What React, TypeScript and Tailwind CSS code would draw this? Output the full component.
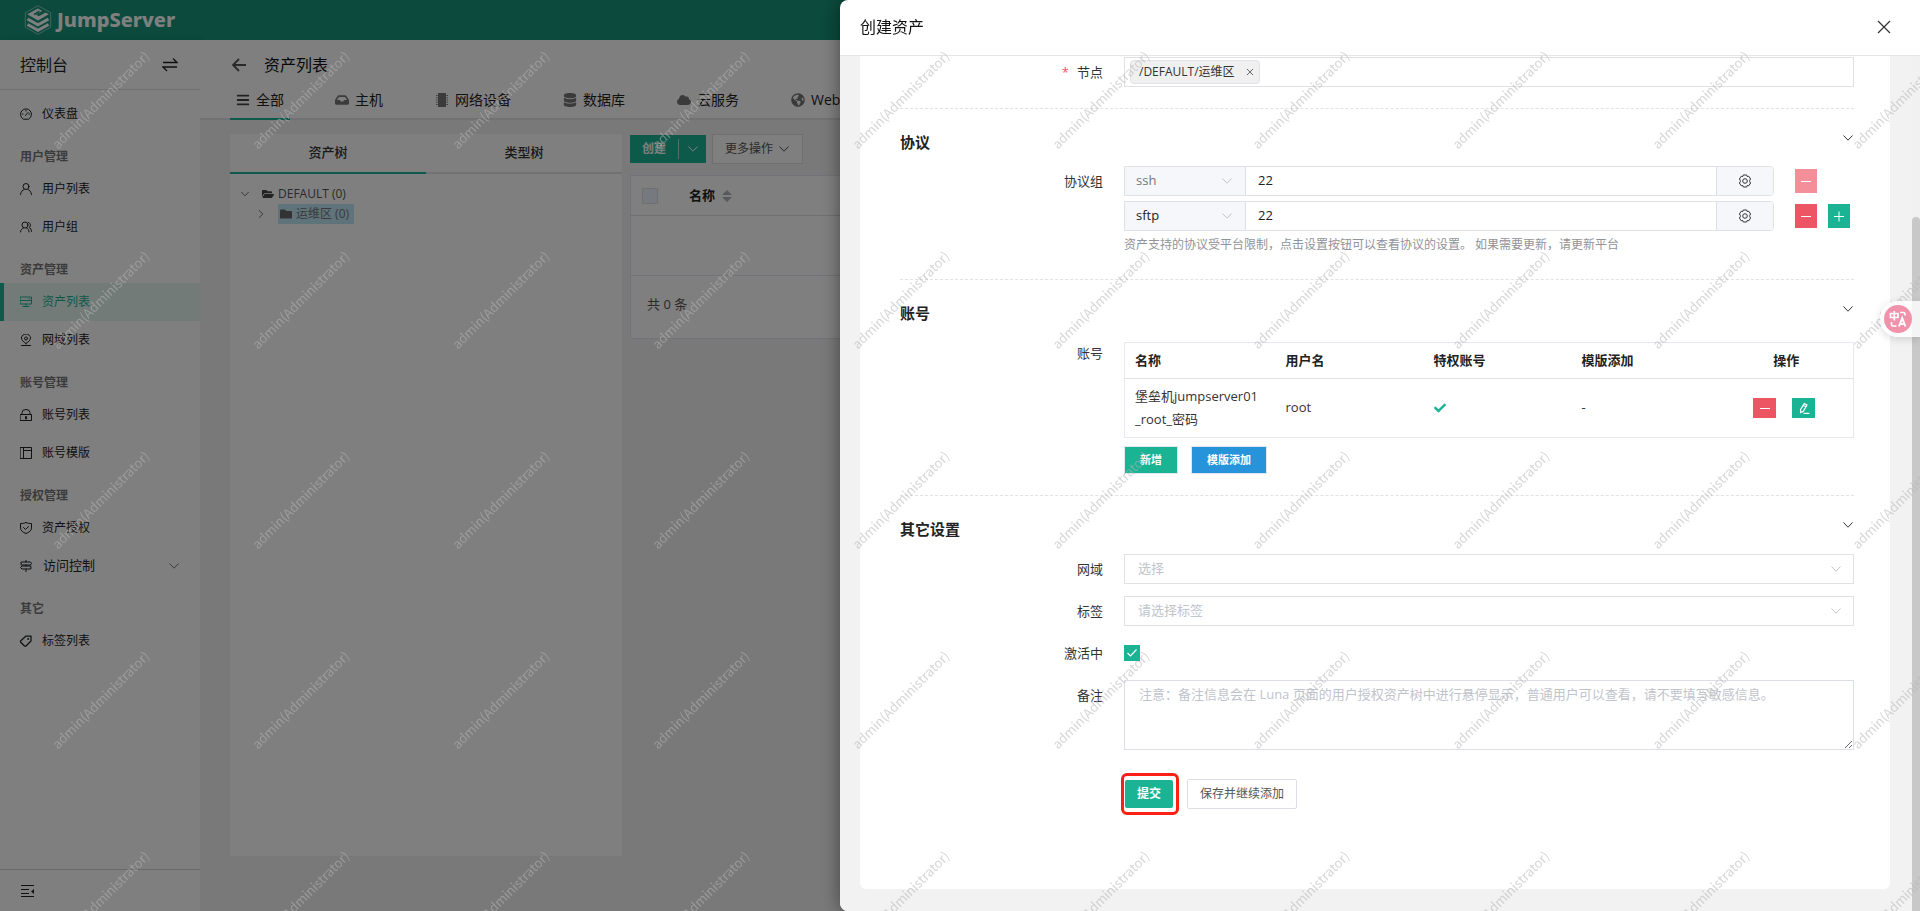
import React, { useState } from 'react';
import { FaBars, FaCheck, FaCloud, FaDatabase, FaFolder, FaFolderOpen, FaGlobeAmericas, FaInbox } from 'react-icons/fa';

type IconProps = { className?: string };

const Stroke: React.FC<{ children: React.ReactNode; className?: string }> = ({ children, className = 'size-3' }) => (
  <svg
    viewBox="0 0 24 24"
    className={className}
    fill="none"
    stroke="currentColor"
    strokeWidth="2"
    strokeLinecap="round"
    strokeLinejoin="round"
    aria-hidden="true"
  >
    {children}
  </svg>
);

const Chevron: React.FC<IconProps> = ({ className = 'size-3' }) => (
  <svg viewBox="0 0 12 12" className={className} fill="none" stroke="currentColor" strokeWidth="1" aria-hidden="true">
    <path d="M1.500 3.500 6 8.200l4.500-4.700" />
  </svg>
);

const Minus: React.FC = () => (
  <svg viewBox="0 0 12 12" className="size-3" stroke="currentColor" strokeWidth="1" aria-hidden="true">
    <path d="M1 6.500h10" />
  </svg>
);

const Plus: React.FC = () => (
  <svg viewBox="0 0 12 12" className="size-3" stroke="currentColor" strokeWidth="1" aria-hidden="true">
    <path d="M1 6.500h10M6 1.500v10" />
  </svg>
);

const Gear: React.FC = () => (
  <svg viewBox="0 0 14 14" className="size-[14px]" fill="none" stroke="currentColor" aria-hidden="true">
    <path d="M5.300 1h3.400l.5 1.500 1.600-.2L12.600 5l-.9 1.300v1.400l.9 1.300-1.800 2.700-1.600-.2-.5 1.500H5.300l-.5-1.500-1.600.2L1.400 9l.9-1.300V6.300L1.400 5l1.800-2.700 1.600.2z" />
    <circle cx="7" cy="7" r="2.300" />
  </svg>
);

const Pencil: React.FC = () => (
  <svg viewBox="0 0 12 12" className="size-3" fill="none" stroke="currentColor" strokeWidth="1.200" aria-hidden="true">
    <path d="M6.300 1.600 9 3 5.300 9.300l-2.700 1.200-.1-2.800zM5.300 3.300l2.700 1.500M5.500 11.300h6" />
  </svg>
);

const Microchip: React.FC<IconProps> = ({ className }) => (
  <svg viewBox="0 0 14 14" className={className} fill="currentColor" aria-hidden="true">
    <path d="M3 0h8v14H3z" />
    <path d="M1 2h1.500v1H1zM1 4.250h1.500v1H1zM1 6.500h1.500v1H1zM1 8.750h1.500v1H1zM1 11h1.500v1H1zM11.500 2H13v1h-1.500zM11.500 4.250H13v1h-1.500zM11.500 6.500H13v1h-1.500zM11.500 8.750H13v1h-1.500zM11.500 11H13v1h-1.500z" />
  </svg>
);

const menu = [
  {
    title: '',
    items: [
      { label: '仪表盘', icon: <><path d="M6 22a11 11 0 1 1 12 0z" /><path d="m11 15 5-6M5 12h1M12 5v1M18 12h1" /></> },
    ],
  },
  {
    title: '用户管理',
    items: [
      { label: '用户列表', icon: <><circle cx="12" cy="7" r="6" /><path d="M1 23c1-6 4-9 7-10M23 23c-1-6-4-9-7-10" /></> },
      { label: '用户组', icon: <><circle cx="10" cy="8" r="6" /><path d="M1 22c0-4 3-7 6-8M18 22c0-4-2-7-5-8M17 3c5 1 5 8 1 10 3 1 5 4 5 8" /></> },
    ],
  },
  {
    title: '资产管理',
    items: [
      { label: '资产列表', active: true, icon: <><path d="M1 2h22v14H1zM1 9h22M12 16v5M6 21h12M18 5.500h1" /></> },
      { label: '网域列表', icon: <><path d="M12 19C6 15 3 12 3 8a9 8 0 0 1 18 0c0 4-3 7-9 11zM3 23h18" /><circle cx="12" cy="9" r="3" /></> },
    ],
  },
  {
    title: '账号管理',
    items: [
      { label: '账号列表', icon: <><path d="M1 11h22v12H1zM4 11V7a8 6 0 0 1 16 0v4" /><path d="M12 16v3" strokeWidth="4" /></> },
      { label: '账号模版', icon: <path d="M1 1h22v22H1zM7 1v22M7 7h16" /> },
    ],
  },
  {
    title: '授权管理',
    items: [
      { label: '资产授权', icon: <><path d="M12 1c4 2 7 2 11 2v9c0 5-5 9-11 11C6 21 1 17 1 12V3c4 0 7 0 11-2z" /><path d="m7 11 4 4 6-6" /></> },
      { label: '访问控制', expandable: true, icon: <path d="M12 0v4M3 4h18l2 3-2 3H3zM12 10v2M21 12H4l-3 3 3 3h17zM12 18v6" /> },
    ],
  },
  {
    title: '其它',
    items: [
      { label: '标签列表', icon: <><path d="M12 2h10v10L12 22l-3 0-8-8 0-2z" strokeWidth="2.500" /><circle cx="16" cy="8" r="1" /></> },
    ],
  },
];

const tabs = [
  { label: '全部', Icon: FaBars },
  { label: '主机', Icon: FaInbox },
  { label: '网络设备', Icon: Microchip },
  { label: '数据库', Icon: FaDatabase },
  { label: '云服务', Icon: FaCloud },
  { label: 'Web', Icon: FaGlobeAmericas },
];

const Logo: React.FC = () => (
  <div className="flex items-center gap-[5px] text-white">
    <svg viewBox="0 0 28 30" className="h-[30px] w-7" fill="none" stroke="currentColor" aria-hidden="true">
      <path d="M14 .7 26.700 7.800v14.400L14 29.300 1.300 22.200V7.800z" strokeWidth=".7" opacity=".7" />
      <path d="M14 3.500 3.200 9.300 14 15.500l10.800-6.200-3.200-1.700-6.800 3.700-3-1.700 6.400-3.700z" fill="currentColor" stroke="none" />
      <path d="m10 9.500 5.500-3.300" strokeWidth="1.600" stroke="#169478" />
      <path d="m3.500 14 10.500 5.800L24.500 14M3.500 19.500 14 25.300l10.500-5.800" strokeWidth="3" />
    </svg>
    <span className="font-['Noto_Sans',sans-serif] text-xl leading-8 font-extrabold">JumpServer</span>
  </div>
);

const Sidebar: React.FC = () => (
  <aside className="flex w-[200px] shrink-0 flex-col bg-white text-[#1f2225] shadow-[1px_0_6px_rgba(0,0,0,0.12)]">
    <div className="flex h-[50px] items-center justify-between border-b border-[#e0e0e0] px-5">
      <span className="text-base">控制台</span>
      <button type="button" aria-label="切换视图" className="mr-[2px]">
        <svg viewBox="0 0 16 16" className="size-4" fill="none" stroke="currentColor" strokeWidth="1.300" aria-hidden="true">
          <path d="M1 5.500h14L11 1.500M15 10H1l4 4" />
        </svg>
      </button>
    </div>
    <nav className="flex-1 pt-[5px]">
      {menu.map((group, i) => (
        <div key={i}>
          {group.title && <h3 className="h-[37px] px-5 pt-[14px] text-xs leading-5 font-semibold text-[#777]">{group.title}</h3>}
          {group.items.map((item: any) => (
            <a
              key={item.label}
              href="#"
              className={
                item.active
                  ? 'flex h-[38px] items-center border-l-4 border-[#1ab394] bg-[#e6f7f3] pr-5 pl-4 text-xs text-[#1ab394]'
                  : 'flex h-[38px] items-center pr-5 pl-5 text-xs'
              }
            >
              <Stroke>{item.icon}</Stroke>
              <span className={item.expandable ? 'ml-[11px] flex-1 text-[13px]' : 'ml-[10px] flex-1'}>{item.label}</span>
              {item.expandable && <Chevron className="size-3 text-[#777]" />}
            </a>
          ))}
        </div>
      ))}
    </nav>
    <div className="flex h-[42px] items-center border-t border-[#d5d5d5] px-5">
      <button type="button" aria-label="收起菜单">
        <svg viewBox="0 0 14 14" className="size-[14px]" stroke="currentColor" aria-hidden="true">
          <path d="M1 1.500h13M1 12.500h13M1 5.500h8M1 9.500h8" />
          <path d="M11 7.500 14 5v5z" fill="currentColor" stroke="none" />
        </svg>
      </button>
    </div>
  </aside>
);

const AssetPage: React.FC = () => (
  <main className="flex min-w-0 flex-1 flex-col overflow-hidden bg-[#f2f2f2]">
    <div className="h-20 border-b-2 border-[#e2e4e8] bg-white px-[30px]">
      <div className="flex h-[50px] items-center gap-[18px]">
        <button type="button" aria-label="返回">
          <svg viewBox="0 0 16 16" className="size-4" fill="none" stroke="#555" strokeWidth="1.800" aria-hidden="true">
            <path d="M16 8H3M9 2 3 8l6 6" />
          </svg>
        </button>
        <h1 className="text-base text-[#111]">资产列表</h1>
      </div>
      <div className="flex h-[30px] gap-10 text-sm text-[#222]">
        {tabs.map(({ label, Icon }, i) => (
          <button
            key={label}
            type="button"
            className={
              i === 0
                ? 'flex h-[30px] shrink-0 items-center gap-[6px] border-b-2 border-[#1ab394] px-[6px] pb-2'
                : 'flex h-[30px] shrink-0 items-center gap-[6px] border-b-2 border-transparent pr-[7px] pb-2 pl-[5px]'
            }
          >
            <Icon className={i === 0 ? 'size-[14px] text-[#444]' : 'size-[14px] text-[#777]'} />
            {label}
          </button>
        ))}
      </div>
    </div>

    <div className="flex min-h-0 flex-1 gap-2 pt-[14px] pl-[30px]">
      <section className="mb-[55px] w-[392px] shrink-0 bg-white">
        <div className="grid grid-cols-2 text-[13px] font-medium text-[#333]">
          <button type="button" className="h-10 border-b-2 border-[#1ab394]">资产树</button>
          <button type="button" className="h-10 border-b-2 border-[#e2e4e8]">类型树</button>
        </div>
        <ul className="pt-[10px] pl-[10px] text-xs text-[#555]">
          <li className="flex h-5 items-center">
            <Chevron className="size-[10px]" />
            <FaFolderOpen className="ml-3 size-3 text-[#444]" />
            <span className="ml-1">DEFAULT (0)</span>
          </li>
          <li className="flex h-5 items-center pl-4">
            <Chevron className="size-[10px] -rotate-90" />
            <span className="ml-3 flex h-5 items-center gap-1 bg-[#bee6f5] px-[2px] pr-[5px] text-[#777]">
              <FaFolder className="size-3 text-[#666]" />
              运维区 (0)
            </span>
          </li>
        </ul>
      </section>

      <section className="min-w-0 flex-1">
        <div className="flex gap-[6px] text-xs">
          <div className="mt-px flex h-7 items-center bg-[#1ab394] text-white">
            <button type="button" className="h-full px-3 font-semibold">创建</button>
            <button type="button" aria-label="更多创建方式" className="flex h-5 w-7 items-center justify-center border-l border-white/60">
              <Chevron />
            </button>
          </div>
          <button type="button" className="flex h-[30px] items-center gap-[5px] border border-[#dcdfe6] bg-white px-3 text-[#555]">
            更多操作
            <Chevron />
          </button>
        </div>
        <div className="mt-[11px] h-[164px] border border-[#e4e7f0] bg-white">
          <div className="flex h-10 items-center border-b border-[#dcdfe6] pl-[11px]">
            <input type="checkbox" aria-label="全选" className="size-4 appearance-none border border-[#dcdfe6] bg-[#edf2fc]" />
            <span className="ml-[31px] text-[13px] font-semibold text-[#222]">名称</span>
            <svg viewBox="0 0 10 12" className="ml-[7px] h-3 w-[10px]" fill="#b0b3ba" aria-hidden="true">
              <path d="M5 0 10 5H0zM0 7h10l-5 5z" />
            </svg>
          </div>
          <div className="h-[60px] border-b border-[#e4e7f0]" />
          <p className="pt-[18px] pl-4 text-[13px] leading-5 text-[#555]">共 0 条</p>
        </div>
      </section>
    </div>
  </main>
);

const Section: React.FC<{ title: string; children: React.ReactNode }> = ({ title, children }) => (
  <section className="border-t border-dashed border-[#e2e2e2] pt-[21px]">
    <div className="flex h-6 items-center justify-between">
      <h3 className="text-[15px] leading-6 font-semibold text-[#222]">{title}</h3>
      <button type="button" aria-label={`收起${title}`} className="mb-2">
        <Chevron />
      </button>
    </div>
    {children}
  </section>
);

const Row: React.FC<{ label: string; htmlFor?: string; required?: boolean; children: React.ReactNode }> = ({
  label,
  htmlFor,
  required,
  children,
}) => (
  <div className="flex">
    <label htmlFor={htmlFor} className="w-[203px] shrink-0 text-right text-[13px] leading-[30px]">
      {required && <span className="mr-2 text-[#ed5565]">*</span>}
      {label}
    </label>
    <div className="ml-[21px] min-w-0 flex-1">{children}</div>
  </div>
);

const PickBox: React.FC<{ id: string; placeholder: string }> = ({ id, placeholder }) => (
  <div className="flex h-[30px] items-center border border-[#dfe1e5] pr-[11px] text-[#c0c4cc]">
    <select id={id} defaultValue="" className="h-full flex-1 appearance-none bg-transparent px-[13px] text-[13px] outline-none">
      <option value="">{placeholder}</option>
    </select>
    <Chevron className="pointer-events-none size-3" />
  </div>
);

const ProtocolRow: React.FC<{ name: string; port: string; locked?: boolean; onPort: (v: string) => void }> = ({
  name,
  port,
  locked,
  onPort,
}) => (
  <div className="flex items-center">
    <div className="flex h-[30px] flex-1 overflow-hidden rounded-r-sm border border-[#dfe1e5]">
      <div className="flex w-[121px] items-center border-r border-[#dcdfe6] bg-[#f5f7fa] pr-3 text-[#c0c4cc]">
        <select
          aria-label="协议"
          disabled={locked}
          defaultValue={name}
          className="h-full flex-1 appearance-none bg-transparent px-[11px] text-[13px] text-[#222] outline-none disabled:text-[#777] disabled:opacity-100"
        >
          <option>{name}</option>
        </select>
        <Chevron />
      </div>
      <input
        aria-label={`${name} 端口`}
        value={port}
        onChange={(e) => onPort(e.target.value)}
        className="min-w-0 flex-1 px-3 text-[13px] text-[#222] outline-none"
      />
      <button type="button" aria-label={`${name} 设置`} className="flex w-[57px] items-center justify-center border-l border-[#dcdfe6] bg-[#f5f7fa]">
        <Gear />
      </button>
    </div>
    <div className="flex w-20 gap-[11px] pl-[21px]">
      <button
        type="button"
        aria-label={`删除 ${name}`}
        disabled={locked}
        className="flex h-6 w-[22px] items-center justify-center bg-[#ed5565] text-white disabled:bg-[#f48e98]"
      >
        <Minus />
      </button>
      {!locked && (
        <button type="button" aria-label="添加协议" className="flex h-6 w-[22px] items-center justify-center bg-[#1ab394] text-white">
          <Plus />
        </button>
      )}
    </div>
  </div>
);

const CreateDrawer: React.FC = () => {
  const [ports, setPorts] = useState({ ssh: '22', sftp: '22' });
  const [active, setActive] = useState(true);
  const [comment, setComment] = useState('');

  return (
    <div
      role="dialog"
      aria-label="创建资产"
      className="fixed inset-y-0 right-0 flex w-[56.25%] flex-col overflow-hidden rounded-l-lg bg-white text-[#333] shadow-[0_0_18px_rgba(0,0,0,0.45)]"
    >
      <header className="flex h-14 shrink-0 items-center justify-between border-b border-[#e6e6e8] px-5 pb-px">
        <h2 className="text-base text-[#111]">创建资产</h2>
        <button type="button" aria-label="关闭" className="mr-[9px]">
          <svg viewBox="0 0 14 14" className="size-[14px]" stroke="#333" strokeWidth="1.200" aria-hidden="true">
            <path d="m1 1 12 12M13 1 1 13" />
          </svg>
        </button>
      </header>

      <div className="flex min-h-0 flex-1 bg-[#f2f2f2]">
        <form className="mb-[22px] ml-5 flex-1 rounded-b-md bg-white pr-9 pl-10" onSubmit={(e) => e.preventDefault()}>
          <div className="pt-px pb-[21px]">
            <Row label="节点" required>
              <div className="flex h-[30px] items-center border border-[#dfe1e5] px-[5px]">
                <span className="flex h-6 items-center gap-2 rounded-sm border border-[#e0e2e6] bg-[#f0f0f1] pr-[2px] pl-2 text-xs text-[#333]">
                  /DEFAULT/运维区
                  <button type="button" aria-label="移除节点" className="p-[3px]">
                    <svg viewBox="0 0 8 8" className="size-2" stroke="#666" aria-hidden="true">
                      <path d="m1 1 6 6M7 1 1 7" />
                    </svg>
                  </button>
                </span>
              </div>
            </Row>
          </div>

          <Section title="协议">
            <div className="pt-3 pb-[24px]">
              <Row label="协议组">
                <div className="flex flex-col gap-[5px]">
                  <ProtocolRow name="ssh" port={ports.ssh} locked onPort={(v) => setPorts({ ...ports, ssh: v })} />
                  <ProtocolRow name="sftp" port={ports.sftp} onPort={(v) => setPorts({ ...ports, sftp: v })} />
                </div>
                <p className="pt-1 text-xs leading-5 text-[#909399]">
                  资产支持的协议受平台限制，点击设置按钮可以查看协议的设置。 如果需要更新，请更新平台
                </p>
              </Row>
            </div>
          </Section>

          <Section title="账号">
            <div className="pt-[13px] pb-[21px]">
              <Row label="账号">
                <table className="mt-1 w-full table-fixed border border-[#e6e8f2] text-left text-[13px]">
                  <thead>
                    <tr className="h-9 border-b border-[#dfe1e5] text-[#222]">
                      <th className="w-[151px] px-[10px] font-semibold">名称</th>
                      <th className="w-[148px] px-[10px] font-semibold">用户名</th>
                      <th className="w-[148px] px-[10px] font-semibold">特权账号</th>
                      <th className="w-[148px] px-[10px] font-semibold">模版添加</th>
                      <th className="px-[10px] text-center font-semibold">操作</th>
                    </tr>
                  </thead>
                  <tbody>
                    <tr className="h-[59px]">
                      <td className="px-[10px] leading-[23px] break-words">堡垒机jumpserver01 _root_密码</td>
                      <td className="px-[10px]">root</td>
                      <td className="px-[10px]">
                        <FaCheck className="size-3 text-[#1ab394]" />
                      </td>
                      <td className="px-[10px]">-</td>
                      <td className="pr-[14px] pl-[10px]">
                        <div className="flex justify-center gap-4">
                          <button type="button" aria-label="删除账号" className="flex h-5 w-[23px] items-center justify-center bg-[#ed5565] text-white">
                            <Minus />
                          </button>
                          <button type="button" aria-label="编辑账号" className="flex h-5 w-[23px] items-center justify-center bg-[#1ab394] text-white">
                            <Pencil />
                          </button>
                        </div>
                      </td>
                    </tr>
                  </tbody>
                </table>
                <div className="flex gap-[13px] pt-2 text-[11px] font-semibold text-white">
                  <button type="button" className="h-7 border border-[#e4e5ee] bg-[#1ab394] bg-clip-padding px-[15px]">新增</button>
                  <button type="button" className="h-7 border border-[#e4e5ee] bg-[#2693da] bg-clip-padding px-[15px]">模版添加</button>
                </div>
              </Row>
            </div>
          </Section>

          <Section title="其它设置">
            <div className="flex flex-col gap-3 pt-[13px]">
              <Row label="网域" htmlFor="domain">
                <PickBox id="domain" placeholder="选择" />
              </Row>
              <Row label="标签" htmlFor="labels">
                <PickBox id="labels" placeholder="请选择标签" />
              </Row>
              <Row label="激活中" htmlFor="active">
                <div className="grid h-[30px] content-center">
                  <input
                    id="active"
                    type="checkbox"
                    checked={active}
                    onChange={(e) => setActive(e.target.checked)}
                    className="col-start-1 row-start-1 size-4 appearance-none border border-[#dcdfe6] checked:border-[#1ab394] checked:bg-[#1ab394]"
                  />
                  {active && (
                    <svg
                      viewBox="0 0 16 16"
                      className="pointer-events-none col-start-1 row-start-1 size-4"
                      fill="none"
                      stroke="#fff"
                      strokeWidth="1.200"
                      aria-hidden="true"
                    >
                      <path d="m3.500 8 3 3 6-6.500" />
                    </svg>
                  )}
                </div>
              </Row>
              <Row label="备注" htmlFor="comment">
                <textarea
                  id="comment"
                  value={comment}
                  onChange={(e) => setComment(e.target.value)}
                  placeholder="注意：备注信息会在 Luna 页面的用户授权资产树中进行悬停显示，普通用户可以查看，请不要填写敏感信息。"
                  className="block h-[70px] w-full resize-y border border-[#dcdfe6] px-[14px] py-[3px] text-[13px] leading-5 outline-none placeholder:text-[#c0c4cc]"
                />
              </Row>
            </div>
          </Section>

          <div className="flex items-center gap-2 pt-[23px] pl-[221px] text-xs">
            <div className="rounded-md border-[3px] border-[#fb2016] py-1 pr-[3px] pl-px">
              <button type="submit" className="block h-7 rounded-xs bg-[#1ab394] px-3 font-semibold text-white">
                提交
              </button>
            </div>
            <button type="button" className="h-[30px] rounded-xs border border-[#dcdfe6] bg-white px-3 text-[#555]">
              保存并继续添加
            </button>
          </div>
        </form>

        <div className="ml-[22px] w-2 bg-[#f1f1f1] pt-[161px]">
          <div className="h-full rounded-t-full bg-[#c8c8c8]" />
        </div>
      </div>
    </div>
  );
};

const Watermark: React.FC = () => (
  <div className="pointer-events-none fixed inset-0 overflow-hidden" aria-hidden="true">
    <div className="grid w-[calc(100%+200px)] auto-rows-[200px] grid-cols-[repeat(auto-fill,200px)]">
      {Array.from({ length: 50 }, (_, i) => (
        <span key={i} className="flex items-center justify-center font-['Noto_Sans_CJK_SC',sans-serif] text-[13px] text-[#b5b5b5]/55">
          <span className="-rotate-45">admin(Administrator)</span>
        </span>
      ))}
    </div>
  </div>
);

const TranslateButton: React.FC = () => (
  <button
    type="button"
    aria-label="翻译"
    className="fixed top-[301px] right-0 flex h-9 w-10 items-center rounded-l-full bg-white/80 pl-1 shadow-[0_2px_8px_rgba(0,0,0,0.15)]"
  >
    <svg viewBox="0 0 28 28" className="size-7" fill="none" stroke="#fff" strokeWidth="1.700" aria-hidden="true">
      <circle cx="14" cy="14" r="14" fill="#f092aa" stroke="none" />
      <path d="M6.500 8.500h7.500v4H6.500zM10.300 6v9.500M16 7.500h3.500a1.500 1.500 0 0 1 1.500 1.500v1.500M7.500 17v2.500a1.500 1.500 0 0 0 1.500 1.500h3.500" />
      <path d="m15 21.500 3.200-8.500 3.200 8.500M16.200 19h4" strokeWidth="2" />
    </svg>
  </button>
);

const App: React.FC = () => {
  return (
    <div className="flex h-screen flex-col font-['Open_Sans','Noto_Sans_CJK_SC',sans-serif]">
      <header className="flex h-10 shrink-0 items-center bg-[#169478] px-6">
        <Logo />
      </header>
      <div className="flex min-h-0 flex-1">
        <Sidebar />
        <AssetPage />
      </div>
      <div className="fixed inset-0 bg-black/50" />
      <CreateDrawer />
      <Watermark />
      <TranslateButton />
    </div>
  );
};

export default App;
